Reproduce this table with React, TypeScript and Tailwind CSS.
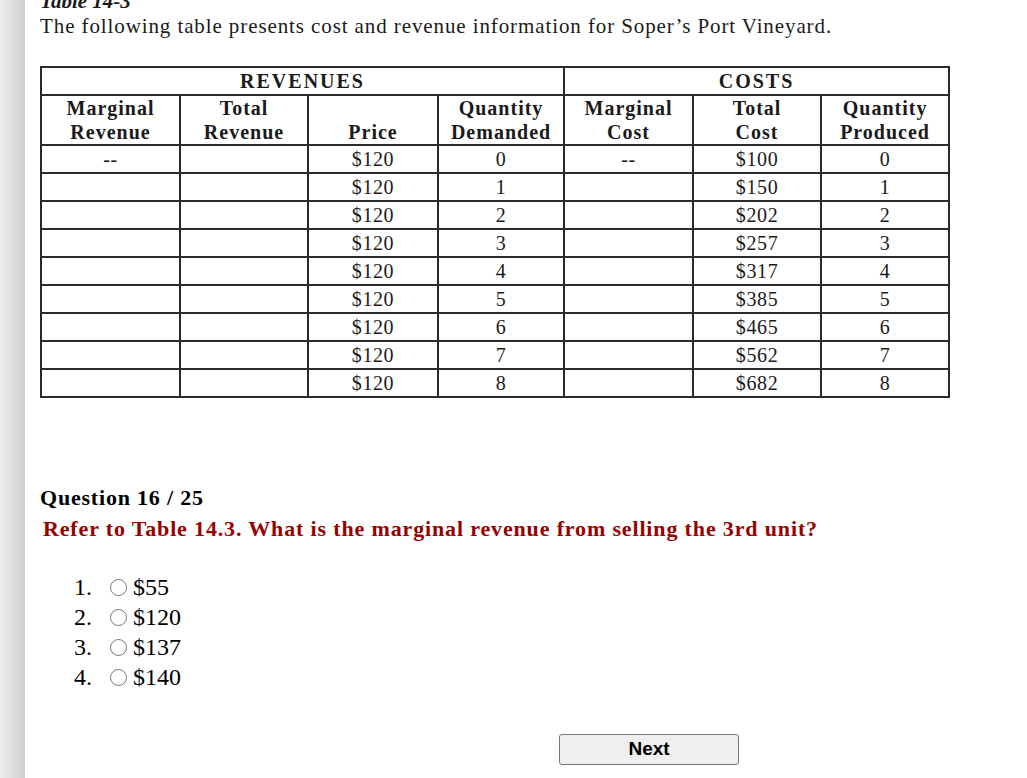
import React from 'react';

const rows = [
  { mr: '--', price: '$120', qd: '0', mc: '--', tc: '$100', qp: '0' },
  { mr: '', price: '$120', qd: '1', mc: '', tc: '$150', qp: '1' },
  { mr: '', price: '$120', qd: '2', mc: '', tc: '$202', qp: '2' },
  { mr: '', price: '$120', qd: '3', mc: '', tc: '$257', qp: '3' },
  { mr: '', price: '$120', qd: '4', mc: '', tc: '$317', qp: '4' },
  { mr: '', price: '$120', qd: '5', mc: '', tc: '$385', qp: '5' },
  { mr: '', price: '$120', qd: '6', mc: '', tc: '$465', qp: '6' },
  { mr: '', price: '$120', qd: '7', mc: '', tc: '$562', qp: '7' },
  { mr: '', price: '$120', qd: '8', mc: '', tc: '$682', qp: '8' },
];

const options = ['$55', '$120', '$137', '$140'];

const cell = 'border-2 border-[#2a2a2a] text-center p-0';

export default function App() {
  return (
    <div className="flex min-h-[778px] bg-white font-['Liberation_Serif',serif] text-[#1a1a1a]">
      {/* left gutter */}
      <div className="w-[25px] shrink-0 bg-gradient-to-r from-[#ededed] to-[#cfcfcf]" />

      <div className="flex-1 pl-[15px] overflow-hidden">
        {/* table figure, scrolled so the caption is cut off */}
        <div className="-mt-[11px]">
          <p className="text-[21px] leading-[24px] font-bold italic">Table 14-3</p>
          <p className="text-[21px] leading-[26px] tracking-[0.9px]">
            The following table presents cost and revenue information for Soper’s Port Vineyard.
          </p>
        </div>

        <table className="mt-[27px] border-collapse border-2 border-[#2a2a2a] table-fixed w-[908px] text-[20px] tracking-[0.6px]">
          <colgroup>
            <col className="w-[139px]" />
            <col className="w-[128px]" />
            <col className="w-[130px]" />
            <col className="w-[126px]" />
            <col className="w-[129px]" />
            <col className="w-[128px]" />
            <col className="w-[128px]" />
          </colgroup>
          <thead className="font-bold tracking-[1px]">
            <tr className="h-[28px]">
              <th colSpan={4} className={cell + ' leading-[26px] tracking-[2px]'}>REVENUES</th>
              <th colSpan={3} className={cell + ' leading-[26px] tracking-[2px]'}>COSTS</th>
            </tr>
            <tr className="h-[50px] leading-[24px]">
              <th className={cell + ' align-top'}>Marginal<br />Revenue</th>
              <th className={cell + ' align-top'}>Total<br />Revenue</th>
              <th className={cell + ' align-bottom'}>Price</th>
              <th className={cell + ' align-top'}>Quantity<br />Demanded</th>
              <th className={cell + ' align-top'}>Marginal<br />Cost</th>
              <th className={cell + ' align-top'}>Total<br />Cost</th>
              <th className={cell + ' align-top'}>Quantity<br />Produced</th>
            </tr>
          </thead>
          <tbody>
            {rows.map((r, i) => (
              <tr key={i} className="h-[28px] leading-[26px]">
                <td className={cell}>{r.mr}</td>
                <td className={cell}></td>
                <td className={cell}>{r.price}</td>
                <td className={cell}>{r.qd}</td>
                <td className={cell}>{r.mc}</td>
                <td className={cell}>{r.tc}</td>
                <td className={cell}>{r.qp}</td>
              </tr>
            ))}
          </tbody>
        </table>

        {/* question */}
        <div className="mt-[86px]">
          <p className="text-[22px] leading-[28px] font-bold text-black tracking-[0.8px]">Question 16 / 25</p>
          <p className="pl-[3px] text-[22px] leading-[34px] font-bold text-[#990000] tracking-[0.85px]">
            Refer to Table 14.3. What is the marginal revenue from selling the 3rd unit?
          </p>
        </div>

        <ol className="mt-[26px] text-[24px] leading-[30px] text-black">
          {options.map((o, i) => (
            <li key={o} className="flex items-center">
              <span className="w-[54px] text-right pr-[2px]">{i + 1}.</span>
              <span className="ml-[16px] mr-[6px] w-[17px] h-[17px] rounded-full border border-[#767676] bg-white" />
              <span>{o}</span>
            </li>
          ))}
        </ol>

        <div className="mt-[42px] flex">
          <button className="ml-[519px] w-[180px] h-[31px] rounded-[3px] border border-[#767676] bg-[#efefef] font-['Liberation_Sans',sans-serif] font-bold text-[19px] text-black">
            Next
          </button>
        </div>
      </div>
    </div>
  );
}
